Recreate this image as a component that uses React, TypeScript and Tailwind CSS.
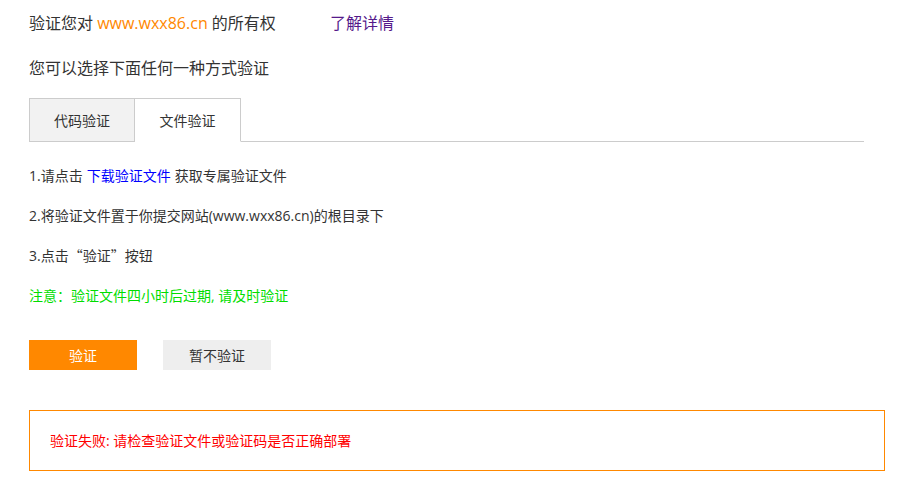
import React from 'react';

const font = { fontFamily: '"Microsoft YaHei", "Open Sans", "Noto Sans CJK SC", sans-serif' };
const cjk = { fontFamily: '"Noto Sans CJK SC", sans-serif' };

export default function App() {
  return (
    <div className="min-h-[489px] bg-white text-[#333] pl-[29px] pr-[37px]" style={font}>
      <div className="flex items-center h-[46px] text-[16px]">
        <span>
          验证您对 <span className="text-[#ff8800]">www.wxx86.cn</span> 的所有权
        </span>
        <a href="#" className="ml-[54px] text-[#551a8b]">了解详情</a>
      </div>
      <div className="flex items-center h-[44px] text-[16px]">您可以选择下面任何一种方式验证</div>

      <div className="mt-[8px] flex border-b border-[#cccccc] mr-[21px] text-[14px]">
        <div className="w-[106px] h-[44px] -mb-px flex items-center justify-center bg-[#f2f2f2] border border-[#cccccc]">
          代码验证
        </div>
        <div className="w-[106px] h-[44px] -mb-px flex items-center justify-center bg-white border border-l-0 border-b-white border-[#cccccc]">
          文件验证
        </div>
      </div>

      <div className="mt-[13px] flex flex-col text-[14px]">
        <div className="h-[40px] flex items-center">
          1.请点击 <a href="#" className="mx-[4px] text-[#0000ff]">下载验证文件</a>获取专属验证文件
        </div>
        <div className="h-[40px] flex items-center">2.将验证文件置于你提交网站(www.wxx86.cn)的根目录下</div>
        <div className="h-[40px] flex items-center">
          3.点击<span style={cjk}>“验证”</span>按钮
        </div>
        <div className="h-[40px] flex items-center text-[#00dd00]">注意：验证文件四小时后过期, 请及时验证</div>
      </div>

      <div className="mt-[25px] flex gap-[26px] text-[14px]">
        <button className="w-[108px] h-[30px] bg-[#ff8800] text-white">验证</button>
        <button className="w-[108px] h-[30px] bg-[#eeeeee] text-[#333]">暂不验证</button>
      </div>

      <div className="mt-[40px] h-[61px] border border-[#ff8800] flex items-center pl-[20px] text-[14px] text-[#ff0000]">
        验证失败: 请检查验证文件或验证码是否正确部署
      </div>
    </div>
  );
}
